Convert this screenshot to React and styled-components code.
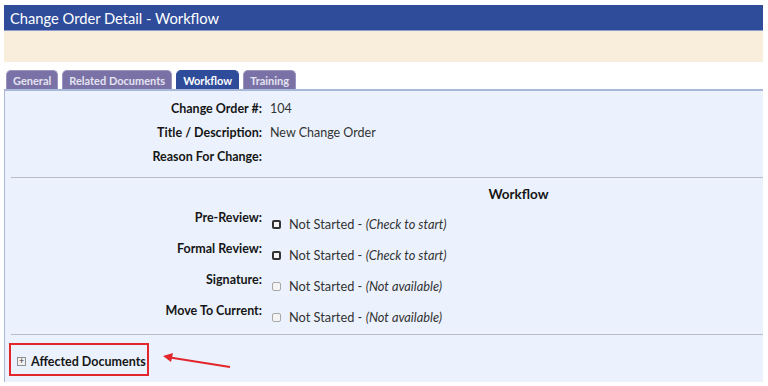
import React from 'react'
import styled, { createGlobalStyle } from 'styled-components'

const GlobalStyle = createGlobalStyle`
  body {
    margin: 0;
    background: #ffffff;
    font-family: Lato, "Open Sans", sans-serif;
  }
`

const tabs = ['General', 'Related Documents', 'Workflow', 'Training']

const info = [
  { label: 'Change Order #:', value: '104' },
  { label: 'Title / Description:', value: 'New Change Order' },
  { label: 'Reason For Change:', value: '' },
]

const steps = [
  { label: 'Pre-Review:', note: 'Check to start', enabled: true },
  { label: 'Formal Review:', note: 'Check to start', enabled: true },
  { label: 'Signature:', note: 'Not available', enabled: false },
  { label: 'Move To Current:', note: 'Not available', enabled: false },
]

const App = () => {
  return (
    <>
      <GlobalStyle />
      <Page>
        <TitleBar>Change Order Detail - Workflow</TitleBar>
        <MessageBand />
        <TabStrip>
          {tabs.map((t) => (
            <Tab key={t} active={t === 'Workflow'}>{t}</Tab>
          ))}
        </TabStrip>
        <Content>
          <InfoGrid>
            {info.map((row) => (
              <React.Fragment key={row.label}>
                <Label>{row.label}</Label>
                <Value>{row.value}</Value>
              </React.Fragment>
            ))}
          </InfoGrid>
          <Divider space={9} />
          <WorkflowGrid>
            <span />
            <Heading>Workflow</Heading>
            {steps.map((s) => (
              <React.Fragment key={s.label}>
                <Label>{s.label}</Label>
                <Status>
                  <Box enabled={s.enabled} />
                  Not Started - <em>({s.note})</em>
                </Status>
              </React.Fragment>
            ))}
          </WorkflowGrid>
          <Divider space={4} />
          <Footer>
            <Highlight>
              <Expander>+</Expander>
              Affected Documents
            </Highlight>
            <Arrow width="70" height="16" viewBox="0 0 70 16">
              <line x1="68" y1="14" x2="8" y2="4.5" stroke="#e3262b" strokeWidth="2" />
              <polygon points="1,3 11,0 9,9" fill="#e3262b" />
            </Arrow>
          </Footer>
        </Content>
      </Page>
    </>
  )
}

export default App

const Page = styled.div`
  padding: 5px 5px 4px 4px;
`

const TitleBar = styled.div`
  height: 26px;
  background: #2e4c9a;
  color: #ffffff;
  font-size: 14.7px;
  line-height: 26px;
  padding-left: 6px;
  border-bottom: 1px solid #8c9dcb;
  box-sizing: border-box;
`

const MessageBand = styled.div`
  height: 31px;
  background: #f9eddc;
`

const TabStrip = styled.div`
  height: 27px;
  display: flex;
  align-items: flex-end;
  gap: 4px;
  padding-left: 2px;
`

const Tab = styled.div`
  height: 19px;
  box-sizing: border-box;
  padding: 0 6px;
  border-radius: 5px 5px 0 0;
  font-size: 11px;
  font-weight: bold;
  line-height: 20px;
  background: ${(p) => (p.active ? '#2e4c9a' : '#7a72a6')};
  color: ${(p) => (p.active ? '#ffffff' : '#e4e3f0')};
  border: 1px solid ${(p) => (p.active ? '#2e4c9a' : '#9a94bf')};
  border-bottom: none;
`

const Content = styled.div`
  position: relative;
  background: #ebf2fd;
  border-top: 2px solid #a9b8d9;
  border-left: 1px solid #a9b8d9;
  height: 293px;
  padding-top: 5px;
  box-sizing: border-box;
`

const InfoGrid = styled.div`
  display: grid;
  grid-template-columns: 257px 1fr;
  column-gap: 8px;
  grid-auto-rows: 24px;
  align-items: center;
`

const Label = styled.div`
  text-align: right;
  font-size: 12.5px;
  font-weight: bold;
  color: #161616;
`

const Value = styled.div`
  font-size: 12.5px;
  color: #333333;
`

const Divider = styled.hr`
  margin: ${(p) => p.space}px 0 0 6px;
  border: none;
  border-top: 1px solid #b9bdc6;
`

const WorkflowGrid = styled.div`
  display: grid;
  grid-template-columns: 257px 1fr;
  column-gap: 8px;
  grid-template-rows: 22px repeat(4, 31px);
  padding-top: 6px;
  align-items: start;
  ${Label} {
    padding-top: 4px;
  }
`

const Heading = styled.div`
  text-align: center;
  font-size: 13.5px;
  font-weight: bold;
  color: #161616;
  line-height: 20px;
  padding-left: 4px;
`

const Status = styled.div`
  display: flex;
  align-items: center;
  padding-top: 10px;
  font-size: 12.8px;
  color: #333333;
  white-space: pre;
  em {
    font-style: italic;
  }
`

const Box = styled.span`
  width: 9px;
  height: 9px;
  box-sizing: border-box;
  margin: 0 8px 0 2px;
  border: ${(p) => (p.enabled ? '2px solid #333333' : '1.5px solid #a8a8a8')};
  border-radius: 2px;
  background: #f4f4f4;
`

const Footer = styled.div`
  display: flex;
  align-items: center;
  padding: 8px 0 0 4px;
`

const Highlight = styled.div`
  display: flex;
  align-items: center;
  gap: 5px;
  width: 140px;
  height: 33px;
  box-sizing: border-box;
  border: 2px solid #e3262b;
  padding: 3px 0 0 6px;
  font-size: 12.5px;
  font-weight: bold;
  color: #161616;
`

const Expander = styled.span`
  width: 9px;
  height: 9px;
  box-sizing: border-box;
  border: 1px solid #8e8e8e;
  background: #f2f2f2;
  font-size: 9px;
  line-height: 6px;
  text-align: center;
  font-weight: normal;
  color: #333;
`

const Arrow = styled.svg`
  position: absolute;
  left: 157px;
  top: 262px;
`
